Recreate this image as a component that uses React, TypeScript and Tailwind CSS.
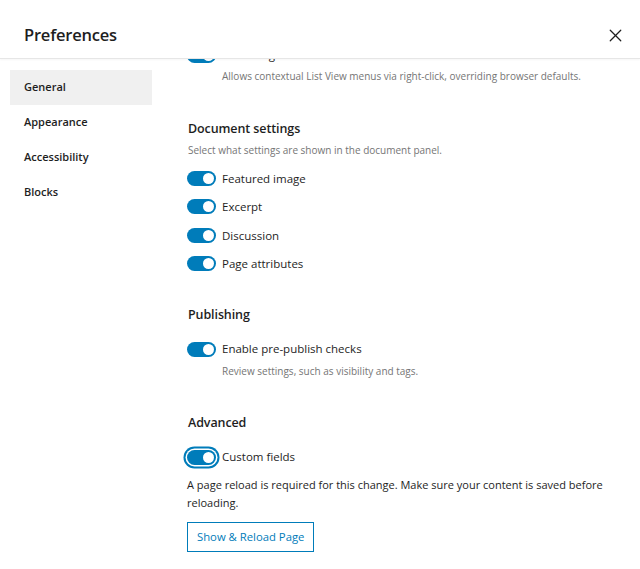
import React from 'react';
import { X } from 'lucide-react';

const font = { fontFamily: '"Open Sans", "Noto Sans", sans-serif' };

const Toggle: React.FC<{ focused?: boolean }> = ({ focused }) => (
  <span
    className={`relative flex-shrink-0 inline-flex items-center justify-end w-[29px] h-[15px] rounded-full bg-[#007cba] pr-[2px] ${
      focused ? 'ring-2 ring-[#007cba] ring-offset-[1.5px] ring-offset-white' : ''
    }`}
  >
    <span className="block w-[11px] h-[11px] rounded-full bg-white" />
  </span>
);

const ToggleRow: React.FC<{ label: string; focused?: boolean; className?: string }> = ({ label, focused, className }) => (
  <div className={`flex items-center gap-[6px] ${className ?? 'h-[20px]'}`}>
    <Toggle focused={focused} />
    <span className="text-[11.5px] text-[#1e1e1e] leading-none">{label}</span>
  </div>
);

const Help: React.FC<{ children: React.ReactNode; className?: string }> = ({ children, className }) => (
  <p className={`pl-[35px] text-[10px] leading-[16px] text-[#757575] ${className ?? ''}`}>{children}</p>
);

const Heading: React.FC<{ children: React.ReactNode; className?: string }> = ({ children, className }) => (
  <h3 className={`pl-[1px] text-[12.5px] leading-[18px] font-semibold text-[#1e1e1e] tracking-[-0.1px] ${className ?? ''}`}>
    {children}
  </h3>
);

const navItems = ['General', 'Appearance', 'Accessibility', 'Blocks'];

export default function App() {
  return (
    <div style={font} className="w-[640px] h-[569px] bg-white flex flex-col overflow-hidden">
      <header className="h-[59px] flex-shrink-0 flex items-center justify-between pt-[12px] pl-[24px] pr-[10px] border-b border-[#e6e6e6] shadow-[0_1px_2px_rgba(0,0,0,0.04)] relative z-10 bg-white">
        <h1 className="text-[16.5px] font-semibold text-[#1e1e1e] tracking-[-0.2px]">Preferences</h1>
        <button className="text-[#1e1e1e] p-1">
          <X size={21} strokeWidth={1.4} />
        </button>
      </header>

      <div className="flex flex-1 min-h-0">
        <nav className="w-[162px] flex-shrink-0 px-[10px] pt-[11px] flex flex-col">
          {navItems.map((item, i) => (
            <div
              key={item}
              className={`h-[35px] flex items-center pl-[14px] text-[11px] font-semibold text-[#1e1e1e] ${
                i === 0 ? 'bg-[#f0f0f0]' : ''
              }`}
            >
              {item}
            </div>
          ))}
        </nav>

        <main className="flex-1 min-w-0 overflow-hidden pl-[25px] pr-[24px]">
          <ToggleRow label="Enable right-click menus" className="h-[20px] -mt-[14px]" />
          <Help className="mt-[3px]">Allows contextual List View menus via right-click, overriding browser defaults.</Help>

          <Heading className="mt-[36px]">Document settings</Heading>
          <p className="mt-[4px] pl-[1px] text-[10px] leading-[16px] text-[#757575]">
            Select what settings are shown in the document panel.
          </p>
          <div className="mt-[6px] flex flex-col">
            <ToggleRow label="Featured image" className="h-[28.5px]" />
            <ToggleRow label="Excerpt" className="h-[28.5px]" />
            <ToggleRow label="Discussion" className="h-[28.5px]" />
            <ToggleRow label="Page attributes" className="h-[28.5px]" />
          </div>

          <Heading className="mt-[28px]">Publishing</Heading>
          <ToggleRow label="Enable pre-publish checks" className="h-[20px] mt-[15px]" />
          <Help className="mt-[4px]">Review settings, such as visibility and tags.</Help>

          <Heading className="mt-[35px]">Advanced</Heading>
          <ToggleRow label="Custom fields" focused className="h-[20px] mt-[15px]" />
          <p className="mt-[9px] text-[11px] leading-[18px] text-[#1e1e1e]">
            A page reload is required for this change. Make sure your content is saved before reloading.
          </p>
          <button className="mt-[10px] h-[30px] px-[9px] border border-[#007cba] text-[#007cba] text-[11.3px] bg-white">
            Show &amp; Reload Page
          </button>
        </main>
      </div>
    </div>
  );
}
